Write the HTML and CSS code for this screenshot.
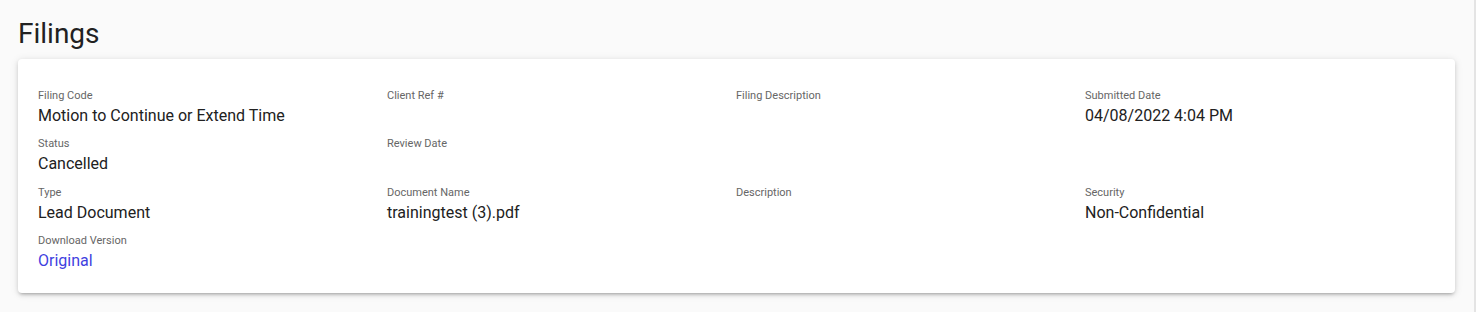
FILE: index.html
```html
<!DOCTYPE html>
<html lang="en">
<head>
<meta charset="utf-8">
<title>Filings</title>
<link rel="stylesheet" href="styles.css">
</head>
<body>
<div class="page">
  <h1 class="title">Filings</h1>
  <section class="card">
    <div class="grid">
      <div class="field"><div class="label">Filing Code</div><div class="value">Motion to Continue or Extend Time</div></div>
      <div class="field"><div class="label">Client Ref #</div><div class="value"></div></div>
      <div class="field"><div class="label">Filing Description</div><div class="value"></div></div>
      <div class="field"><div class="label">Submitted Date</div><div class="value">04/08/2022 4:04 PM</div></div>

      <div class="field"><div class="label">Status</div><div class="value">Cancelled</div></div>
      <div class="field"><div class="label">Review Date</div><div class="value"></div></div>
      <div class="field"></div>
      <div class="field"></div>

      <div class="field"><div class="label">Type</div><div class="value">Lead Document</div></div>
      <div class="field"><div class="label">Document Name</div><div class="value">trainingtest (3).pdf</div></div>
      <div class="field"><div class="label">Description</div><div class="value"></div></div>
      <div class="field"><div class="label">Security</div><div class="value">Non-Confidential</div></div>

      <div class="field"><div class="label">Download Version</div><div class="value"><a class="link" href="#">Original</a></div></div>
    </div>
  </section>
</div>
</body>
</html>
```

FILE: styles.css
```css
html, body {
  margin: 0;
  padding: 0;
  background: #fafafa;
}
body {
  font-family: Roboto, "Noto Sans", "Liberation Sans", sans-serif;
  color: #212121;
  height: 312px;
  overflow: hidden;
}
.page {
  width: 1476px;
  height: 312px;
  border-right: 2px solid #e4e4e4;
  padding: 0 19px 0 18px;
  box-sizing: border-box;
}
.title {
  margin: 0;
  padding-top: 16px;
  font-size: 28px;
  font-weight: 400;
  line-height: 36px;
  height: 43px;
  color: #212121;
}
.card {
  background: #fff;
  border-radius: 4px;
  box-shadow: 0 3px 3px -2px rgba(0,0,0,0.2), 0 2px 4px 0 rgba(0,0,0,0.12), 0 1px 8px 0 rgba(0,0,0,0.1);
  padding: 29px 20px 20px 20px;
  width: 1437px;
  box-sizing: border-box;
}
.grid {
  display: grid;
  grid-template-columns: repeat(4, 349px);
  row-gap: 8.33px;
}
.field {
  min-height: 40px;
}
.label {
  font-size: 11px;
  line-height: 16px;
  color: #666;
}
.value {
  font-size: 16px;
  line-height: 24px;
  min-height: 24px;
  color: #212121;
}
.link {
  color: #3f3fe0;
  text-decoration: none;
}
```
